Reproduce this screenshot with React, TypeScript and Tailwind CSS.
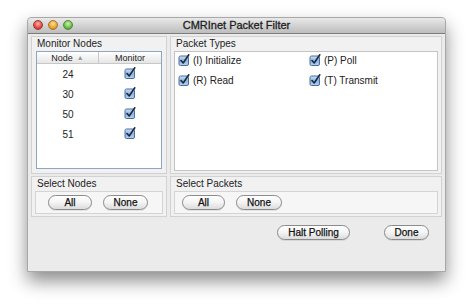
import React from "react";

function Check() {
  return (
    <svg width="12" height="12" viewBox="0 0 12 12" className="shrink-0">
      <defs>
        <linearGradient id="cb" x1="0" y1="0" x2="0" y2="1">
          <stop offset="0" stopColor="#cfe0f5" />
          <stop offset="0.5" stopColor="#8fb4e3" />
          <stop offset="1" stopColor="#b7d1f0" />
        </linearGradient>
      </defs>
      <rect x="1" y="2" width="9.5" height="9.5" rx="1.5" fill="url(#cb)" stroke="#4d6f9e" strokeWidth="1" />
      <path d="M3 6.5 L5.2 9 L10.8 0.8" fill="none" stroke="#1b2a3f" strokeWidth="1.6" strokeLinecap="round" strokeLinejoin="round" />
    </svg>
  );
}

function Btn({ label, w }: { label: string; w: string }) {
  return (
    <button
      className={`${w} h-[15px] rounded-full border border-[#8b8b8b] bg-gradient-to-b from-white via-[#f4f4f4] to-[#dcdcdc] text-[10px] text-[#111] leading-none flex items-center justify-center shadow-[0_1px_0_rgba(0,0,0,0.08)] [-webkit-text-stroke:0.25px_#111]`}
    >
      {label}
    </button>
  );
}

function Panel({ title, className, children }: { title: string; className?: string; children: React.ReactNode }) {
  return (
    <div className={`flex flex-col border border-[#d2d2d2] bg-[#f1f1f1] ${className ?? ""}`}>
      <div className="h-[14px] pl-[5px] text-[10px] leading-[14px] text-[#222]">{title}</div>
      {children}
    </div>
  );
}

const nodes = [24, 30, 50, 51];
const packets = [
  ["(I) Initialize", "(P) Poll"],
  ["(R) Read", "(T) Transmit"],
];

export default function App() {
  return (
    <div className="w-[474px] h-[308px] bg-white pt-[17px] pl-[27px] font-['Liberation_Sans',Arial,sans-serif]">
      <div className="w-[419px] h-[255px] flex flex-col bg-[#ebebeb] border border-[#a8a8a8] rounded-t-[4px] shadow-[0_9px_18px_rgba(0,0,0,0.45)]">
        {/* title bar */}
        <div className="relative h-[16px] shrink-0 flex items-center justify-center rounded-t-[4px] bg-gradient-to-b from-[#e9e9e9] to-[#bdbdbd] border-b border-[#7c7c7c]">
          <div className="absolute left-[5px] top-[2px] flex gap-[5px]">
            <span className="w-[10px] h-[10px] rounded-full border border-[#9c3a36] bg-[radial-gradient(circle_at_50%_35%,#ffb1a8,#e2473d_60%,#b5261e)]" />
            <span className="w-[10px] h-[10px] rounded-full border border-[#a6752a] bg-[radial-gradient(circle_at_50%_35%,#ffe0a0,#e9a22f_60%,#c07a12)]" />
            <span className="w-[10px] h-[10px] rounded-full border border-[#4c8a36] bg-[radial-gradient(circle_at_50%_35%,#d0f2b0,#6cbc48_60%,#3f8a27)]" />
          </div>
          <span className="text-[11px] text-[#1e1e1e] leading-none [-webkit-text-stroke:0.3px_#1e1e1e]">CMRInet Packet Filter</span>
        </div>

        {/* body */}
        <div className="flex flex-col px-[3px] pt-[2px]">
          <div className="flex gap-[3px] h-[138px]">
            <Panel title="Monitor Nodes" className="w-[136px]">
              <div className="mx-[4px] mb-[4px] flex-1 border border-[#8fa6c2] bg-white flex flex-col">
                <div className="flex h-[12px] border-b border-[#c8c8c8] bg-gradient-to-b from-white to-[#e6e6e6] text-[9px] leading-[12px] text-[#222]">
                  <div className="w-[62px] border-r border-[#c8c8c8] flex items-center justify-center gap-[4px]">
                    Node <span className="text-[7px] text-[#9a9a9a]">▲</span>
                  </div>
                  <div className="flex-1 text-center">Monitor</div>
                </div>
                {nodes.map((n) => (
                  <div key={n} className="flex h-[20px] items-center text-[10px] text-[#222]">
                    <div className="w-[62px] text-center">{n}</div>
                    <div className="flex-1 flex justify-center pb-[2px]">
                      <Check />
                    </div>
                  </div>
                ))}
              </div>
            </Panel>
            <Panel title="Packet Types" className="flex-1">
              <div className="mx-[3px] mb-[2px] flex-1 border border-[#c4c4c4] bg-white pl-[3px] pt-[2px] flex flex-col gap-[8px]">
                {packets.map((row) => (
                  <div key={row[0]} className="flex h-[12px] items-center text-[10px] text-[#222]">
                    <div className="w-[131px] flex items-center gap-[3px]">
                      <Check />
                      <span>{row[0]}</span>
                    </div>
                    <div className="flex items-center gap-[3px]">
                      <Check />
                      <span>{row[1]}</span>
                    </div>
                  </div>
                ))}
              </div>
            </Panel>
          </div>

          <div className="flex gap-[3px] h-[41px] mt-[2px]">
            <Panel title="Select Nodes" className="w-[136px]">
              <div className="mx-[3px] mb-[2px] flex-1 border border-[#d4d4d4] bg-[#f6f6f6] flex items-center pl-[12px] gap-[11px]">
                <Btn label="All" w="w-[44px]" />
                <Btn label="None" w="w-[45px]" />
              </div>
            </Panel>
            <Panel title="Select Packets" className="flex-1">
              <div className="mx-[3px] mb-[2px] flex-1 border border-[#d4d4d4] bg-[#f6f6f6] flex items-center pl-[7px] gap-[11px]">
                <Btn label="All" w="w-[43px]" />
                <Btn label="None" w="w-[46px]" />
              </div>
            </Panel>
          </div>

          <div className="flex justify-end gap-[34px] pr-[13px] mt-[8px]">
            <Btn label="Halt Polling" w="w-[73px]" />
            <Btn label="Done" w="w-[45px]" />
          </div>
        </div>
      </div>
    </div>
  );
}
